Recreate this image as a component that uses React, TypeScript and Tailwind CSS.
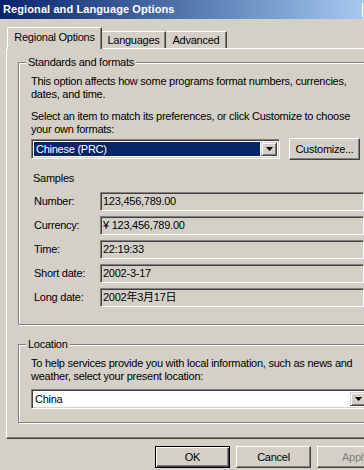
import React from "react";

const FONT = { fontFamily: '"Liberation Sans", "Noto Sans CJK SC", sans-serif' };

function Arrow() {
  return (
    <svg width="7" height="4" viewBox="0 0 7 4" className="block">
      <path d="M0 0H7L3.5 4Z" fill="#000" />
    </svg>
  );
}

function ArrowButton() {
  return (
    <div className="w-[16px] h-full flex items-center justify-center bg-[#d4d0c8] border border-t-[#d4d0c8] border-l-[#d4d0c8] border-b-[#404040] border-r-[#404040] shadow-[inset_1px_1px_0_#ffffff,inset_-1px_-1px_0_#808080]">
      <Arrow />
    </div>
  );
}

function Group({ label, className, children }: { label: string; className?: string; children: React.ReactNode }) {
  return (
    <div className={"relative border border-[#808080] shadow-[inset_1px_1px_0_#ffffff,1px_1px_0_#ffffff] " + (className ?? "")}>
      <span className="absolute -top-[7px] left-[7px] px-[2px] bg-[#d4d0c8] leading-[13px]">{label}</span>
      {children}
    </div>
  );
}

function Field({ label, value }: { label: string; value: string }) {
  return (
    <div className="flex items-center h-[19px]">
      <div className="w-[66px] ml-[3px] leading-[13px]">{label}</div>
      <div className="w-[264px] h-[19px] flex items-center pl-[2px] border border-t-[#808080] border-l-[#808080] border-b-white border-r-white shadow-[inset_1px_1px_0_#404040,inset_-1px_-1px_0_#d4d0c8] leading-[13px]">
        {value}
      </div>
    </div>
  );
}

function Button({ children, def, disabled, className }: { children: React.ReactNode; def?: boolean; disabled?: boolean; className?: string }) {
  return (
    <div
      className={
        "h-[22px] flex items-center justify-center bg-[#d4d0c8] " +
        (def
          ? "border border-black shadow-[inset_1px_1px_0_#ffffff,inset_-1px_-1px_0_#404040,inset_-2px_-2px_0_#808080] "
          : "border border-t-white border-l-white border-b-[#404040] border-r-[#404040] shadow-[inset_-1px_-1px_0_#808080] ") +
        (disabled ? "text-[#808080] " : "") +
        (className ?? "")
      }
    >
      {children}
    </div>
  );
}

export default function App() {
  return (
    <div className="w-[364px] h-[470px] bg-[#d4d0c8] overflow-hidden text-[11px] text-black leading-[13px] tracking-[-0.25px]" style={FONT}>
      {/* Title bar */}
      <div className="h-[19px] flex items-center justify-between bg-gradient-to-r from-[#0a246a] to-[#a6caf0]">
        <div className="pl-[3px] text-white font-bold text-[11px] tracking-[0.1px]">Regional and Language Options</div>
        <div className="w-[2px] h-[14px] border-l border-white bg-[#d4d0c8]" />
      </div>

      {/* Tabs */}
      <div className="relative z-10 mt-[8px] h-[22px] flex items-end pl-[7px]">
        <div className="w-[95px] h-[22px] flex items-center justify-center pb-[2px] bg-[#d4d0c8] border-t border-l border-white rounded-tl-[2px] border-r border-r-[#404040] shadow-[inset_-1px_0_0_#808080]">
          Regional Options
        </div>
        <div className="w-[64px] h-[17px] mb-[1px] flex items-center justify-center bg-[#d4d0c8] border-t border-white border-r border-r-[#404040] shadow-[inset_-1px_0_0_#808080]">
          Languages
        </div>
        <div className="w-[61px] h-[17px] mb-[1px] flex items-center justify-center bg-[#d4d0c8] border-t border-white border-r border-r-[#404040] shadow-[inset_-1px_0_0_#808080]">
          Advanced
        </div>
      </div>

      {/* Tab panel */}
      <div className="-mt-[1px] ml-[6px] w-[380px] border border-t-white border-l-white border-b-[#404040] border-r-[#404040] shadow-[inset_-1px_-1px_0_#808080] pb-[15px]">
        <Group label="Standards and formats" className="ml-[11px] mt-[13px] w-[370px] pt-[12px] pl-[12px] pb-[17px]">
          <p className="leading-[13px]">
            This option affects how some programs format numbers, currencies,
            <br />
            dates, and time.
          </p>
          <p className="mt-[9px] leading-[13px]">
            Select an item to match its preferences, or click Customize to choose
            <br />
            your own formats:
          </p>
          <div className="mt-[2px] flex items-center">
            <div className="w-[249px] h-[20px] flex p-[2px] bg-white border border-t-[#808080] border-l-[#808080] border-b-white border-r-white shadow-[inset_1px_1px_0_#404040,inset_-1px_-1px_0_#d4d0c8]">
              <div className="flex-1 flex items-center pl-[2px] mr-[1px] bg-[#0a246a] text-white">Chinese (PRC)</div>
              <ArrowButton />
            </div>
            <Button className="ml-[9px] w-[71px]">Customize...</Button>
          </div>
          <div className="mt-[12px] ml-[2px] leading-[13px]">Samples</div>
          <div className="mt-[7px] flex flex-col gap-[5px]">
            <Field label="Number:" value="123,456,789.00" />
            <Field label="Currency:" value="¥ 123,456,789.00" />
            <Field label="Time:" value="22:19:33" />
            <Field label="Short date:" value="2002-3-17" />
            <Field label="Long date:" value="2002年3月17日" />
          </div>
        </Group>

        <Group label="Location" className="ml-[11px] mt-[19px] w-[370px] pt-[12px] pl-[12px] pb-[13px]">
          <p className="leading-[13px]">
            To help services provide you with local information, such as news and
            <br />
            weather, select your present location:
          </p>
          <div className="mt-[6px] w-[338px] h-[20px] flex p-[2px] bg-white border border-t-[#808080] border-l-[#808080] border-b-white border-r-white shadow-[inset_1px_1px_0_#404040,inset_-1px_-1px_0_#d4d0c8]">
            <div className="flex-1 flex items-center pl-[1px]">China</div>
            <ArrowButton />
          </div>
        </Group>
      </div>

      {/* Buttons */}
      <div className="mt-[7px] pl-[155px] flex gap-[6px]">
        <Button def className="w-[75px] shrink-0">OK</Button>
        <Button className="w-[75px] shrink-0">Cancel</Button>
        <Button disabled className="w-[75px] shrink-0 justify-start pl-[24px]">Apply</Button>
      </div>
    </div>
  );
}
